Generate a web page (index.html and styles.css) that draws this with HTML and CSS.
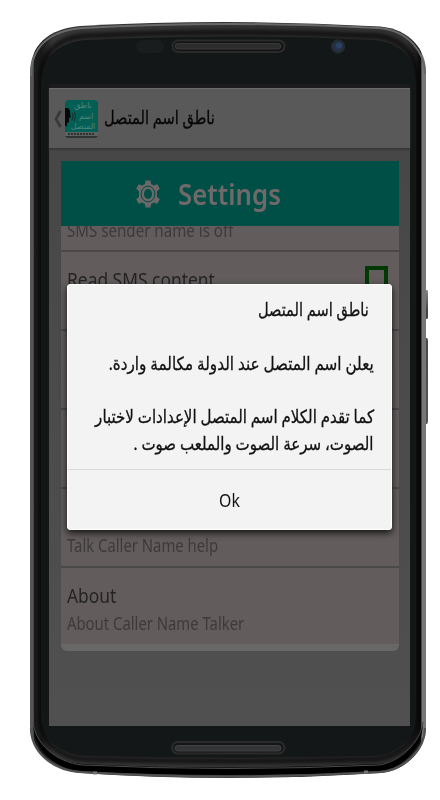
FILE: index.html
```html
<!DOCTYPE html>
<html lang="en">
<head>
    <meta charset="UTF-8">
    <meta name="viewport" content="width=device-width, initial-scale=1.0">
    <title>ناطق اسم المتصل</title>
    <link rel="stylesheet" href="styles.css">
</head>
<body>

    <div class="phone">
        <!-- Phone body -->
        <svg class="phone-frame" width="440" height="800" viewBox="0 0 440 800">
            <defs>
                <linearGradient id="side" x1="30" x2="426" y1="0" y2="0" gradientUnits="userSpaceOnUse">
                    <stop offset="0" stop-color="#555757"/>
                    <stop offset=".008" stop-color="#555757"/>
                    <stop offset=".011" stop-color="#1b1b1b"/>
                    <stop offset=".03" stop-color="#191919"/>
                    <stop offset=".058" stop-color="#363636"/>
                    <stop offset=".95" stop-color="#303030"/>
                    <stop offset=".975" stop-color="#1d1d1d"/>
                    <stop offset=".986" stop-color="#080808"/>
                    <stop offset=".99" stop-color="#777"/>
                    <stop offset="1" stop-color="#777"/>
                </linearGradient>
                <linearGradient id="key" x1="0" x2="0" y1="0" y2="1">
                    <stop offset="0" stop-color="#888"/>
                    <stop offset=".15" stop-color="#444"/>
                    <stop offset="1" stop-color="#555"/>
                </linearGradient>
                <filter id="soft"><feGaussianBlur stdDeviation="1.6"/></filter>
            </defs>
            <path d="M424 290h3q1 0 1 2v25q0 2-1 2h-3zM424 338h3q1 1 1 3v80q0 2-1 3h-3z" fill="url(#key)"/>
            <path d="M30 74C30 45 48 29 80 26Q228 18 380 26.500C410 29 426 50 426 72V728C426 750 405 771 381 773Q228 783 80 773C50 770 30 748 30 726Z" fill="url(#side)"/>
            <path d="M33 722C33 749 53 769 82 771Q228 779 379 771C403 769 423 749 423 722C421 742 400 762 379 764Q228 771 82 764C55 762 35 743 33 722Z" fill="#000"/>
            <path d="M33 722C35 743 55 762 82 765Q228 772 379 765C400 762 421 742 423 722" fill="none" stroke="#4c4c4c" stroke-width="1"/>
            <path d="M31 728C31 750 50 770 80 772Q228 781 380 772C404 770 425 750 425 728" fill="none" stroke="#525252" stroke-width="2.200"/>
            <path d="M31 76C31 47 49 31 82 28Q228 20 378 28C408 30 425 52 425 74" fill="none" stroke="#686868" stroke-width="2"/>
            <path d="M41 80C41 54 57 38 84 36Q228 29 376 36C402 38 417 56 417 80V718C417 741 400 756 376 759Q228 763 84 759C58 757 41 741 41 718Z" fill="none" stroke="#050505" stroke-width="6" filter="url(#soft)" opacity=".55"/>
            <path d="M41 84C41 59 57 42 86 40Q228 33 374 40C401 42 416 60 416 84V716C416 739 397 754 374 756Q228 759 86 756C59 754 41 740 41 714Z" fill="#131717"/>
            <path d="M49 84H410V88H49Z" fill="#1b1b1b"/>
            <rect x="136" y="40" width="28" height="13" rx="6.500" fill="#191d1e"/>
            <rect x="172.500" y="40.500" width="112" height="11.500" rx="5.750" fill="#111313" stroke="#2b2b2b" stroke-width="2"/>
            <rect x="175" y="43.500" width="106" height="5.500" rx="2.750" fill="#2c2c2c" stroke="#3b3b3b"/>
            <circle cx="338" cy="46.500" r="7.200" fill="#252a2c"/>
            <circle cx="338" cy="46.500" r="5" fill="#22334b"/>
            <circle cx="339" cy="45.500" r="3" fill="#2b4260"/>
            <rect x="172" y="742" width="112.500" height="11.500" rx="5.750" fill="#151717" stroke="#2b2b2b" stroke-width="2"/>
            <rect x="175" y="745.500" width="106" height="5.500" rx="2.750" fill="#333536" stroke="#414243"/>
            <path d="M93 771.500h4v3h-4zM364 770.500h4v3h-4z" fill="#747474"/>
        </svg>

        <div class="screen">
            <div class="action-bar">
                <svg class="back" width="8" height="18" viewBox="0 0 8 18">
                    <path d="M6.500 1 2 9 6.500 17" fill="none" stroke="#393939" stroke-width="2.800"/>
                </svg>
                <svg class="app-icon" width="33" height="38" viewBox="0 0 33 38">
                    <clipPath id="iconShape"><rect width="33" height="38" rx="4"/></clipPath>
                    <g clip-path="url(#iconShape)">
                        <rect width="33" height="38" fill="#035e54"/>
                        <path d="M0 8 3 8Q6 11 5 14L6 17 4 18V22L2 23V26H0Z" fill="#080808"/>
                        <path d="M7 13q2 3 0 7M9 11.500q3 5 0 10" fill="none" stroke="#152d2a"/>
                        <text class="icon-text" x="18" y="8">ناطق</text>
                        <text class="icon-text" x="21" y="19">اسم</text>
                        <text class="icon-text" x="18" y="29">المتصل</text>
                        <rect y="32" width="33" height="4" fill="#5c6261"/>
                        <path d="M3 34h27" stroke="#202020" stroke-width="1.500" stroke-dasharray="2 1"/>
                        <rect y="36" width="33" height="2" fill="#303434"/>
                    </g>
                </svg>
                <span class="app-name" dir="rtl">ناطق اسم المتصل</span>
            </div>

            <div class="card">
                <div class="banner">
                    <svg class="gear" width="24" height="28" viewBox="0 0 24 28">
                        <path d="M9.500 .5h5l.6 3.500 2.900 1.600 3.300-1.300 2.500 4.400-2.800 2.500v5.600l2.800 2.500-2.500 4.400-3.300-1.300-2.900 1.600-.6 3.500h-5L8.900 24 6 22.400l-3.300 1.300L.2 19.300 3 16.800v-5.600L.2 8.700l2.500-4.400L6 5.600 8.900 4Z" fill="#6b6867"/>
                        <ellipse cx="12" cy="14" rx="6.900" ry="7.900" fill="none" stroke="#004f47" stroke-width="1"/>
                        <ellipse cx="12" cy="14" rx="4" ry="5" fill="#004f47"/>
                    </svg>
                    <span class="banner-title">Settings</span>
                </div>
                <div class="row row-cut">
                    <div class="sub sub-sms">SMS sender name is off</div>
                </div>
                <div class="row">
                    <div class="label label-sms">Read SMS content</div>
                    <div class="checkbox"></div>
                </div>
                <div class="row"></div>
                <div class="row"></div>
                <div class="row row-help">
                    <div class="sub">Talk Caller Name help</div>
                </div>
                <div class="row row-last">
                    <div class="label">About</div>
                    <div class="sub">About Caller Name Talker</div>
                </div>
            </div>

            <!-- Dialog -->
            <div class="dialog" dir="rtl">
                <div class="dialog-body">
                    <div class="dialog-title"><span class="narrow">ناطق اسم المتصل</span></div>
                    <p><span class="wide">يعلن اسم المتصل عند الدولة مكالمة واردة.</span></p>
                    <p><span>كما تقدم الكلام اسم المتصل الإعدادات لاختبار</span><br><span>الصوت، سرعة الصوت والملعب صوت .</span></p>
                </div>
                <button class="ok">Ok</button>
            </div>
        </div>
    </div>

</body>
</html>
```
FILE: styles.css
```css
* {
    box-sizing: border-box;
}
body {
    margin: 0;
    background: white;
    font-family: "Noto Sans", "DejaVu Sans", sans-serif;
}
.phone {
    position: relative;
    width: 440px;
    height: 800px;
    padding: 88px 30px 74px 49px;
    overflow: hidden;
}
.phone-frame {
    position: absolute;
    left: 0;
    top: 0;
}
.screen {
    position: relative;
    width: 361px;
    height: 638px;
    background: linear-gradient(#474747 60px, #4b4b4b 300px, #505050);
}
.action-bar {
    display: flex;
    align-items: center;
    height: 61px;
    padding-left: 5px;
    background: #595959;
    border-top: 1px solid #6b6b6b;
    border-bottom: 1px solid #363636;
    box-shadow: 0 1px 2px #3a3a3a;
}
.app-icon {
    margin: 1px 0 0 3px;
}
.icon-text {
    font-family: "DejaVu Sans", sans-serif;
    font-size: 8px;
    text-anchor: middle;
    fill: #4e8781;
}
.app-name {
    margin-left: 6px;
    padding-bottom: 3px;
    font-size: 18px;
    line-height: 26px;
    color: #070707;
    white-space: nowrap;
    -webkit-text-stroke: 0.3px #070707;
    transform: scaleX(.81);
    transform-origin: left;
}
.card {
    width: 338px;
    height: 490px;
    margin: 12px 0 0 12px;
    background: #686868;
    border-radius: 0 0 6px 6px;
    overflow: hidden;
}
.banner {
    display: flex;
    align-items: center;
    height: 65px;
    padding-left: 75px;
    background: #004f47;
}
.banner-title {
    margin-left: 18px;
    font-size: 29px;
    font-weight: 600;
    color: #6f6a69;
    transform: scaleX(.89);
    transform-origin: left;
}
.row {
    position: relative;
    height: 79px;
    padding: 14px 6px 0;
    background: #625d5c;
    border-bottom: 2px solid #4a4848;
    white-space: nowrap;
    overflow: hidden;
}
.row-cut {
    display: flex;
    align-items: flex-end;
    height: 26px;
    padding: 0 6px 7px;
}
.row-help {
    padding-top: 43px;
}
.row-last {
    height: 76px;
    border-bottom: none;
}
.label {
    width: max-content;
    font-size: 20px;
    line-height: 28px;
    color: #242323;
    transform: scaleX(.87);
    transform-origin: left;
}
.sub {
    width: max-content;
    font-size: 18px;
    line-height: 26px;
    color: #3c3a3a;
    transform: scaleX(.825);
    transform-origin: left;
}
.sub-sms {
    transform: scaleX(.84);
}
.checkbox {
    position: absolute;
    right: 11px;
    top: 14px;
    width: 23px;
    height: 28px;
    border: 4px solid #003a02;
}
.dialog {
    position: absolute;
    left: 18px;
    top: 196px;
    width: 325px;
    height: 246px;
    background: #f3f3f3;
    border: 1px solid white;
    border-radius: 3px;
    box-shadow: 0 3px 7px rgba(0, 0, 0, 0.8);
}
.dialog-body {
    height: 185px;
    padding: 11px 17px 0;
    border-bottom: 1px solid #d9d9d9;
    font-size: 18px;
    line-height: 26.5px;
    color: #111;
    white-space: nowrap;
    -webkit-text-stroke: 0.3px #111;
}
.dialog-body span {
    display: inline-block;
    transform: scaleX(.835);
    transform-origin: right;
}
.dialog-body .narrow {
    transform: scaleX(.81);
}
.dialog-body .wide {
    transform: scaleX(.845);
}
.dialog-title {
    padding-right: 5px;
}
.dialog-body p {
    margin: 27px 0 0;
}
.ok {
    display: block;
    width: 100%;
    height: 59px;
    padding: 1px 0 0;
    border: none;
    background: none;
    font-family: "Noto Sans", sans-serif;
    font-size: 18px;
    color: #111;
    transform: scaleX(.88);
}
```
